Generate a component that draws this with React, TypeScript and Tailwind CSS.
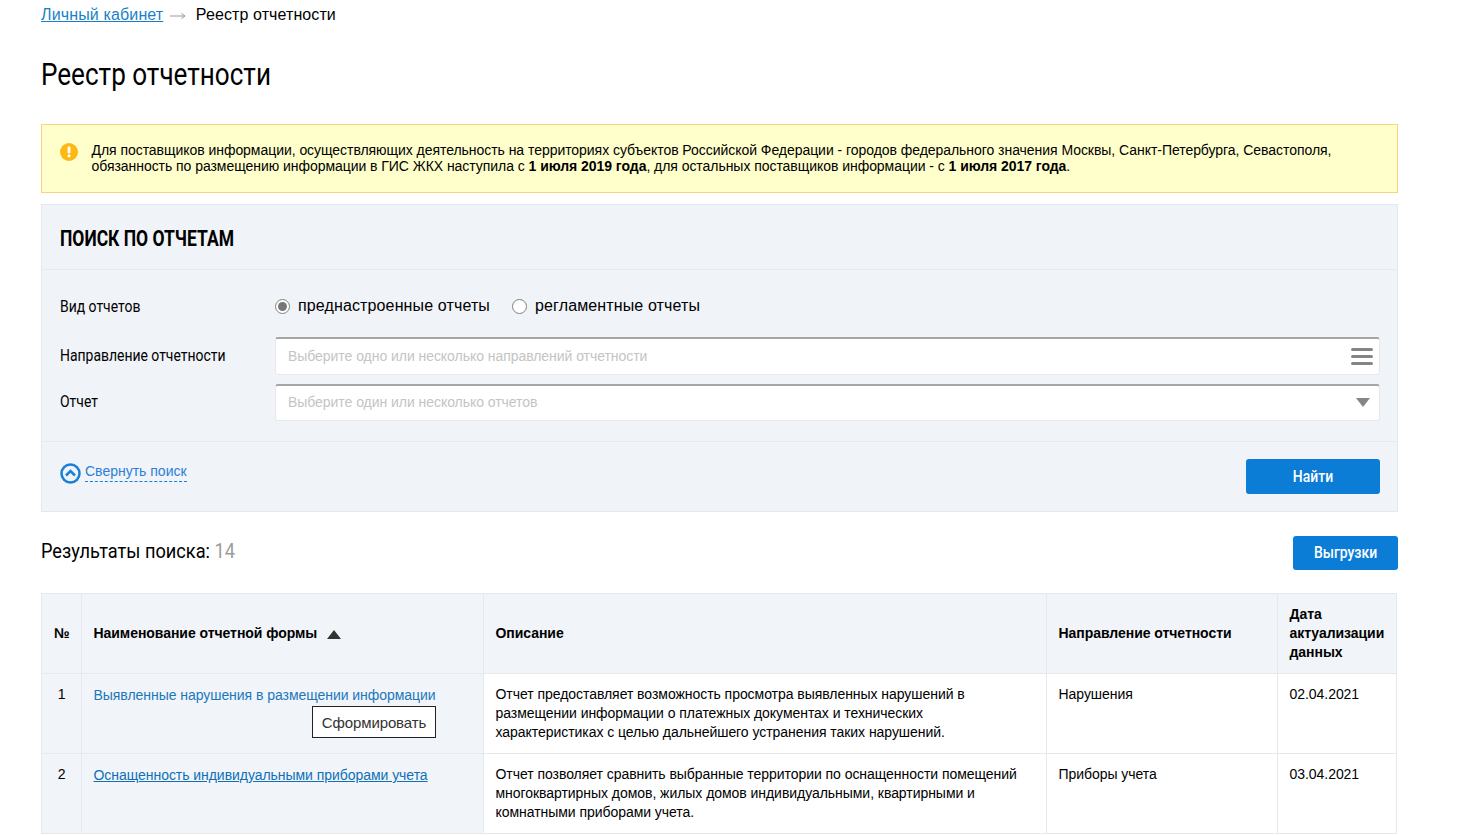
import React from 'react';

const cond = "font-['Roboto',sans-serif] whitespace-nowrap";
const label = `${cond} block w-[215px] origin-left scale-x-[.82] text-[17px]`;
const tight = 'tracking-[-0.047px]';

const rows = [
  {
    n: '1',
    name: 'Выявленные нарушения в размещении информации',
    hover: false,
    desc: (
      <>
        Отчет предоставляет возможность просмотра выявленных нарушений в<br />
        размещении информации о платежных документах и технических<br />
        характеристиках с целью дальнейшего устранения таких нарушений.
      </>
    ),
    dir: 'Нарушения',
    date: '02.04.2021',
  },
  {
    n: '2',
    name: 'Оснащенность индивидуальными приборами учета',
    hover: true,
    desc: (
      <>
        Отчет позволяет сравнить выбранные территории по оснащенности помещений<br />
        многоквартирных домов, жилых домов индивидуальными, квартирными и<br />
        комнатными приборами учета.
      </>
    ),
    dir: 'Приборы учета',
    date: '03.04.2021',
  },
];

const App: React.FC = () => {
  return (
    <div className="h-[835px] overflow-hidden bg-white pl-[41px] pr-[62px] font-['Liberation_Sans',Arial,sans-serif] text-black">
      {/* Breadcrumbs */}
      <div className="flex h-[29px] items-center text-[16px] leading-[29px] tracking-[0.14px]">
        <a className="text-[#1a7fc9] underline">Личный кабинет</a>
        <svg width="16" height="8" viewBox="0 0 16 8" className="ml-[7px] mr-[10px] mt-[3px]">
          <path d="M0 4h15M11.500 1.500 15 4l-3.500 2.500" fill="none" stroke="#9a9a9a" strokeWidth="1" />
        </svg>
        <span className="-ml-[0.5px] tracking-[0.1px]">Реестр отчетности</span>
      </div>

      <h1 className={`${cond} mt-[25px] h-[40px] origin-left scale-x-[.815] text-[32px] leading-[40px]`}>Реестр отчетности</h1>

      {/* Notice */}
      <div className={`${tight} mt-[30px] flex h-[69px] items-start border border-[#fdd27f] bg-[#ffffcc] pl-[18px] pt-[17px] text-[14px] leading-[16px]`}>
        <svg width="18" height="18" viewBox="0 0 18 18" className="mr-[13px] mt-[1px] shrink-0">
          <circle cx="9" cy="9" r="9" fill="#fdb913" />
          <rect x="7.600" y="3.500" width="2.800" height="7" rx="1" fill="#fff" />
          <rect x="7.600" y="11.500" width="2.800" height="2.800" rx="1" fill="#fff" />
        </svg>
        <p className="ml-[0.5px]">
          Для поставщиков информации, осуществляющих деятельность на территориях субъектов Российской Федерации - городов федерального значения Москвы, Санкт-Петербурга, Севастополя,
          <br />
          обязанность по размещению информации в ГИС ЖКХ наступила с <b>1 июля 2019 года</b>, для остальных поставщиков информации - с <b>1 июля 2017 года</b>.
        </p>
      </div>

      {/* Search panel */}
      <section className="mt-[11px] h-[308px] border border-[#e3e8ee] bg-[#f0f3f8]">
        <div className="flex h-[65px] items-center border-b border-[#e6eaf0] pl-[18px] pt-[2px]">
          <h2 className={`${cond} origin-left scale-x-[.795] text-[22px] font-bold`}>ПОИСК ПО ОТЧЕТАМ</h2>
        </div>
        <div className="h-[172px] border-b border-[#e6eaf0] pl-[18px] pr-[17px]">
          <div className="flex h-[67px] items-center pt-[5px]">
            <div className="w-[215px] pt-[2px]">
              <label className={label}>Вид отчетов</label>
            </div>
            <div className="flex items-center text-[16px] tracking-[0.13px]">
              <span className="flex h-[15px] w-[15px] items-center justify-center rounded-full border border-[#808080] bg-white">
                <span className="h-[9px] w-[9px] rounded-full bg-[#777]" />
              </span>
              <span className="ml-[8px]">преднастроенные отчеты</span>
              <span className="ml-[22px] h-[15px] w-[15px] rounded-full border border-[#808080] bg-white" />
              <span className="ml-[8px]">регламентные отчеты</span>
            </div>
          </div>
          <div className="flex h-[38px] items-center">
            <div className="w-[215px]">
              <label className={label}>Направление отчетности</label>
            </div>
            <div className={`flex h-[38px] flex-1 items-center justify-between rounded-[3px] border border-[#e6e8eb] border-t-2 border-t-[#a5a5a5] bg-white pl-[12px] pr-[6px] text-[14px] text-[#c4c4c4] ${tight}`}>
              Выберите одно или несколько направлений отчетности
              <span className="flex flex-col gap-[4px]">
                <span className="h-[3px] w-[22px] rounded-[2px] bg-[#858585]" />
                <span className="h-[3px] w-[22px] rounded-[2px] bg-[#858585]" />
                <span className="h-[3px] w-[22px] rounded-[2px] bg-[#858585]" />
              </span>
            </div>
          </div>
          <div className="mt-[9px] flex h-[37px] items-center">
            <div className="w-[215px] pb-[2px]">
              <label className={label}>Отчет</label>
            </div>
            <div className={`flex h-[37px] flex-1 items-center justify-between rounded-[3px] border border-[#e6e8eb] border-t-2 border-t-[#a5a5a5] bg-white pb-[1px] pl-[12px] pr-[9px] text-[14px] text-[#c4c4c4] ${tight}`}>
              Выберите один или несколько отчетов
              <svg width="14" height="9" viewBox="0 0 14 9">
                <path d="M0 0h14L7 9z" fill="#858585" />
              </svg>
            </div>
          </div>
        </div>
        <div className="flex items-start justify-between pl-[18px] pr-[17px]">
          <div className="mt-[21px] flex items-start">
            <svg width="21" height="21" viewBox="0 0 21 21">
              <circle cx="10.500" cy="10.500" r="9" fill="none" stroke="#1a7fd6" strokeWidth="2.500" />
              <path d="M6 12.500l4.500-4.500 4.500 4.500" fill="none" stroke="#1a7fd6" strokeWidth="2.500" />
            </svg>
            <a className="-mt-[1px] ml-[4px] border-b border-dashed border-[#1a7fd6] text-[14px] leading-[19px] text-[#2b80d8]">Свернуть поиск</a>
          </div>
          <button className="mt-[17px] h-[35px] w-[134px] rounded-[3px] bg-[#0c7dd7] text-white">
            <span className={`${cond} block scale-x-[.82] text-[17px] font-medium`}>Найти</span>
          </button>
        </div>
      </section>

      {/* Results */}
      <div className="mt-[24px] flex h-[34px] items-center justify-between">
        <h2 className={`${cond} mb-[2px] origin-left scale-x-[.866] text-[21px]`}>
          Результаты поиска: <span className="text-[#9b9b9b]">14</span>
        </h2>
        <button className="h-[34px] w-[105px] rounded-[3px] bg-[#0c7dd7] text-white">
          <span className={`${cond} block scale-x-[.82] text-[17px] font-medium`}>Выгрузки</span>
        </button>
      </div>

      <table className={`${tight} mt-[23px] w-[1355px] table-fixed border-collapse text-[14px] leading-[19px]`}>
        <colgroup>
          <col className="w-[40px]" />
          <col className="w-[402px]" />
          <col className="w-[563px]" />
          <col className="w-[231px]" />
          <col className="w-[119px]" />
        </colgroup>
        <thead>
          <tr className="h-[80px] bg-[#f1f4f8] text-left font-bold">
            <th className="border border-[#e5e9ee] pl-[12px]">№</th>
            <th className="border border-[#e5e9ee] pl-[11.5px]">
              <span className="flex items-center">
                Наименование отчетной формы
                <svg width="14" height="9" viewBox="0 0 14 9" className="ml-[9.5px] mt-[2px]">
                  <path d="M0 9h14L7 0z" fill="#333" />
                </svg>
              </span>
            </th>
            <th className="border border-[#e5e9ee] pl-[11.5px]">Описание</th>
            <th className="border border-[#e5e9ee] pl-[11.5px]">Направление отчетности</th>
            <th className="border border-[#e5e9ee] pl-[11.5px]">
              Дата<br />актуализации<br />данных
            </th>
          </tr>
        </thead>
        <tbody>
          {rows.map((r) => (
            <tr key={r.n} className="h-[80px] align-top">
              <td className="border border-[#e5e9ee] bg-[#f1f4f8] pt-[11px] text-center">
                <span>{r.n}</span>
              </td>
              <td className="border border-[#e5e9ee] bg-[#f1f4f8] pl-[11.5px] pr-[47px] pt-[12px]">
                <a className={`whitespace-nowrap ${r.hover ? 'text-[#0f70b7] underline' : 'text-[#1a78bd]'}`}>{r.name}</a>
                {!r.hover && (
                  <div className="mt-[1px] flex justify-end">
                    <button className="h-[32px] w-[124px] border border-[#222] bg-white text-[15px] tracking-[-0.12px] text-[#333]">Сформировать</button>
                  </div>
                )}
              </td>
              <td className="border border-[#e5e9ee] pl-[11.5px] pt-[11px]">{r.desc}</td>
              <td className="border border-[#e5e9ee] pl-[11.5px] pt-[11px]">{r.dir}</td>
              <td className="border border-[#e5e9ee] pl-[11.5px] pt-[11px]">{r.date}</td>
            </tr>
          ))}
        </tbody>
      </table>
    </div>
  );
};

export default App;
